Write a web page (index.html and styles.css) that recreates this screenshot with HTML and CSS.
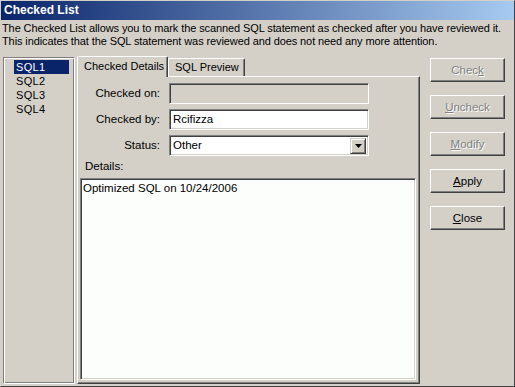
FILE: index.html
```html
<!DOCTYPE html>
<html lang="en">
<head>
    <meta charset="UTF-8">
    <title>Checked List</title>
    <link rel="stylesheet" href="styles.css">
</head>
<body>
    <div class="window">
        <div class="title-bar">Checked List</div>
        <p class="intro">The Checked List allows you to mark the scanned SQL statement as checked after you have reviewed it.<br>This indicates that the SQL statement was reviewed and does not need any more attention.</p>

        <div class="main">
            <ul class="sql-list">
                <li class="selected">SQL1</li>
                <li>SQL2</li>
                <li>SQL3</li>
                <li>SQL4</li>
            </ul>

            <div class="tabs">
                <div class="tab-strip">
                    <div class="tab active">Checked Details</div>
                    <div class="tab">SQL Preview</div>
                </div>
                <div class="tab-panel">
                    <div class="form">
                        <label>Checked on:</label>
                        <div class="field disabled"></div>
                        <label>Checked by:</label>
                        <div class="field">Rcifizza</div>
                        <label>Status:</label>
                        <div class="field select">
                            <span>Other</span>
                            <span class="drop-btn">
                                <svg width="7" height="4" viewBox="0 0 7 4"><path d="M0 0h7L3.5 4z" fill="#000"/></svg>
                            </span>
                        </div>
                    </div>
                    <div class="details-label">Details:</div>
                    <div class="details">Optimized SQL on 10/24/2006</div>
                </div>
            </div>

            <div class="buttons">
                <button class="btn" disabled>Chec<u>k</u></button>
                <button class="btn" disabled><u>U</u>ncheck</button>
                <button class="btn" disabled><u>M</u>odify</button>
                <button class="btn"><u>A</u>pply</button>
                <button class="btn"><u>C</u>lose</button>
            </div>
        </div>
    </div>
</body>
</html>
```

FILE: styles.css
```css
/* Base styles */
* {
    margin: 0;
    padding: 0;
    box-sizing: border-box;
}

body {
    font-family: 'Liberation Sans', Arial, sans-serif;
    font-size: 11px;
    color: #000;
    background: #d4d0c8;
}

.window {
    width: 515px;
    height: 387px;
    border: 1px solid;
    border-color: #d4d0c8 #404040 #404040 #d4d0c8;
    background: #d4d0c8;
    display: flex;
    flex-direction: column;
}

.title-bar {
    height: 19px;
    line-height: 19px;
    padding-left: 3px;
    color: #fff;
    font-weight: bold;
    font-size: 12px;
    background: linear-gradient(to right, #0a246a, #a6caf0);
}

.intro {
    margin-top: 2px;
    padding-left: 1px;
    line-height: 13px;
    letter-spacing: -0.1px;
}

/* Main area */
.main {
    flex: 1;
    display: flex;
    margin-top: 8px;
    padding-left: 2px;
    padding-bottom: 2px;
}

.sql-list {
    list-style: none;
    width: 72px;
    margin-top: 1px;
    padding: 2px 0 0 10px;
    border: 1px solid;
    border-color: #808080 #fff #fff #808080;
    box-shadow: inset 1px 1px #fff, inset -1px -1px #808080;
}

.sql-list li {
    width: 55px;
    height: 14px;
    line-height: 14px;
    padding-left: 2px;
    letter-spacing: 0.3px;
}

.sql-list li.selected {
    background: #0a246a;
    color: #fff;
}

/* Tabs */
.tabs {
    width: 343px;
    margin-left: 2px;
    display: flex;
    flex-direction: column;
}

.tab-strip {
    display: flex;
    height: 20px;
    align-items: flex-end;
}

.tab {
    height: 18px;
    line-height: 16px;
    padding: 0 5px 0 6px;
    border: 1px solid;
    border-bottom: none;
    border-color: #fff #404040 #fff #fff;
    box-shadow: inset -1px 0 #808080;
    border-radius: 2px 2px 0 0;
    white-space: nowrap;
}

.tab.active {
    height: 21px;
    width: 91px;
    margin-bottom: -1px;
    line-height: 18px;
    padding: 0 0 0 6px;
    background: #d4d0c8;
    position: relative;
    z-index: 1;
}

.tab-panel {
    flex: 1;
    display: flex;
    flex-direction: column;
    border: 1px solid;
    border-color: #fff #404040 #404040 #fff;
    box-shadow: inset -1px -1px #808080;
    padding: 6px 2px 3px 2px;
}

.form {
    display: grid;
    grid-template-columns: 80px 200px;
    grid-auto-rows: 21px;
    column-gap: 9px;
    row-gap: 5px;
}

.form label {
    text-align: right;
    line-height: 21px;
    font-size: 11.5px;
}

.field {
    border: 1px solid;
    border-color: #808080 #fff #fff #808080;
    box-shadow: inset 1px 1px #404040, inset -1px -1px #d4d0c8;
    background: #fff;
    padding-left: 3px;
    line-height: 19px;
    font-size: 11.5px;
}

.field.disabled {
    background: #d4d0c8;
}

.field.select {
    display: flex;
    justify-content: space-between;
    align-items: center;
    padding-right: 2px;
}

.drop-btn {
    width: 16px;
    height: 16px;
    display: flex;
    align-items: center;
    justify-content: center;
    background: #d4d0c8;
    border: 1px solid;
    border-color: #d4d0c8 #404040 #404040 #d4d0c8;
    box-shadow: inset 1px 1px #fff, inset -1px -1px #808080;
}

.details-label {
    margin-top: 4px;
    padding-left: 5px;
    line-height: 13px;
    font-size: 11.5px;
}

.details {
    flex: 1;
    margin-top: 5px;
    margin-right: 1px;
    padding: 3px 2px;
    background: #fcfefc;
    border: 1px solid;
    border-color: #808080 #fff #fff #808080;
    box-shadow: inset 1px 1px #404040, inset -1px -1px #d4d0c8;
    line-height: 13px;
    font-size: 11.5px;
}

/* Buttons */
.buttons {
    display: flex;
    flex-direction: column;
    gap: 13px;
    margin-left: 10px;
    margin-top: 2px;
}

.btn {
    width: 75px;
    height: 24px;
    font-family: 'Liberation Sans', Arial, sans-serif;
    font-size: 11.5px;
    color: #000;
    background: #d4d0c8;
    border: 1px solid;
    border-color: #fff #404040 #404040 #fff;
    box-shadow: inset -1px -1px #808080;
}

.btn:disabled {
    color: #808080;
    text-shadow: 1px 1px #fff;
}
```
